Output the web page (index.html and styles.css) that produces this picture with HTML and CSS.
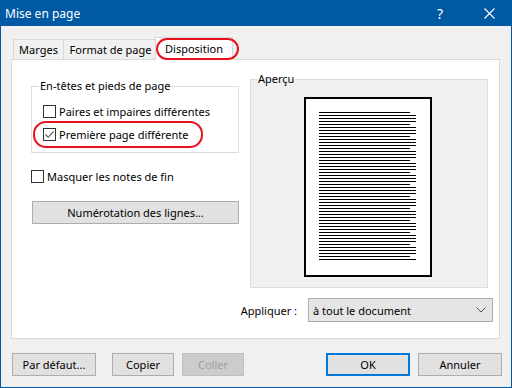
FILE: index.html
```html
<!DOCTYPE html>
<html lang="fr">
<head>
  <meta charset="UTF-8" />
  <title>Mise en page</title>
  <link rel="stylesheet" href="styles.css">
</head>
<body>
  <div class="window">
    <!-- Title bar -->
    <div class="titlebar">
      <span class="title">Mise en page</span>
      <span class="help">?</span>
      <span class="close">
        <svg width="11" height="11" viewBox="0 0 11 11"><path d="M0.5 0.5 L10.5 10.5 M10.5 0.5 L0.5 10.5" stroke="#fff" stroke-width="1.1" fill="none"/></svg>
      </span>
    </div>

    <div class="client">
      <!-- Tabs -->
      <div class="tabs">
        <div class="tab tab-marges">Marges</div>
        <div class="tab tab-format">Format de page</div>
        <div class="tab tab-active">Disposition<span class="mark mark-tab"></span></div>
      </div>

      <!-- Tab panel -->
      <div class="panel">
        <div class="columns">
          <div class="col-left">
            <fieldset class="group headers">
              <legend>En-têtes et pieds de page</legend>
              <label class="check"><span class="box"></span>Paires et impaires différentes</label>
              <label class="check">
                <span class="box">
                  <svg width="11" height="11" viewBox="0 0 11 11"><path d="M1.5 5.5 L4.2 8.3 L9.6 2.4" stroke="#555" stroke-width="1.1" fill="none"/></svg>
                </span>Première page différente<span class="mark mark-check"></span>
              </label>
            </fieldset>
            <label class="check solo"><span class="box"></span>Masquer les notes de fin</label>
            <button class="btn wide">Numérotation des lignes...</button>
          </div>

          <div class="col-right">
            <fieldset class="group preview">
              <legend>Aperçu</legend>
              <div class="page">
                <div class="lines"></div>
              </div>
            </fieldset>
          </div>
        </div>

        <div class="apply-row">
          <span class="apply-label">Appliquer :</span>
          <div class="select">
            <span>à tout le document</span>
            <svg width="10" height="6" viewBox="0 0 10 6"><path d="M0.5 0.5 L5 5 L9.5 0.5" stroke="#555" stroke-width="1" fill="none"/></svg>
          </div>
        </div>
      </div>

      <!-- Dialog buttons -->
      <div class="footer">
        <div class="btn-group">
          <button class="btn">Par défaut...</button>
          <button class="btn small copy">Copier</button>
          <button class="btn small" disabled>Coller</button>
        </div>
        <div class="btn-group right">
          <button class="btn default">OK</button>
          <button class="btn">Annuler</button>
        </div>
      </div>
    </div>
  </div>
</body>
</html>
```

FILE: styles.css
```css
body {
  margin: 0;
  font-family: "Noto Sans", sans-serif;
  font-size: 11px;
  color: #000;
}
.window {
  width: 512px;
  height: 388px;
  box-sizing: border-box;
  border: 1px solid #0059a3;
  border-top: none;
  background: #f0f0f0;
}
.titlebar {
  height: 26px;
  background: #0059a3;
  color: #fff;
  font-size: 12px;
  display: flex;
  align-items: center;
  padding-left: 4px;
}
.title {
  flex: 1;
}
.help {
  font-size: 14px;
  width: 12px;
  margin-right: 35px;
}
.close {
  display: flex;
  width: 11px;
  margin-right: 16px;
}

/* Tabs */
.tabs {
  display: flex;
  align-items: flex-end;
  height: 33px;
  padding-left: 12px;
}
.tab {
  box-sizing: border-box;
  height: 20px;
  border: 1px solid #d9d9d9;
  border-bottom: none;
  background: #f0f0f0;
  display: flex;
  align-items: center;
  justify-content: center;
}
.tab-marges {
  width: 51px;
}
.tab-format {
  width: 95px;
  margin-left: -1px;
}
.tab-active {
  position: relative;
  z-index: 1;
  width: 78px;
  height: 23px;
  margin-left: -3px;
  margin-bottom: -1px;
  padding-bottom: 1px;
  background: #fff;
}
.mark {
  position: absolute;
  border: 2px solid #e8111b;
  box-sizing: border-box;
}
.mark-tab {
  left: 0;
  top: 0;
  width: 83px;
  height: 22px;
  border-radius: 11px;
}

/* Panel */
.panel {
  box-sizing: border-box;
  width: 489px;
  margin-left: 10px;
  border: 1px solid #d9d9d9;
  background: #fff;
  padding: 12px 11px 16px 19px;
}
.columns {
  display: flex;
  gap: 11px;
}
.col-left {
  width: 208px;
  margin-top: 7px;
  display: flex;
  flex-direction: column;
}
.col-right {
  width: 238px;
}
.group {
  margin: 0;
  border: 1px solid #dcdcdc;
  min-width: 0;
}
.group legend {
  line-height: 14px;
  padding: 0 1px;
}
.headers {
  padding: 7px 0 6px 11px;
}
.headers legend {
  margin-left: -4px;
}
.check {
  position: relative;
  display: flex;
  align-items: center;
  height: 23px;
}
.box {
  box-sizing: border-box;
  width: 13px;
  height: 13px;
  border: 1px solid #333;
  background: #fff;
  margin-right: 3px;
  display: flex;
  align-items: center;
  justify-content: center;
}
.mark-check {
  left: -10px;
  top: -2px;
  width: 170px;
  height: 27px;
  border-radius: 13px;
}
.solo {
  margin-top: 12px;
}
.btn {
  box-sizing: border-box;
  font-family: inherit;
  font-size: 11px;
  color: #000;
  height: 23px;
  width: 84px;
  padding: 0;
  border: 1px solid #adadad;
  background: #e1e1e1;
}
.btn.wide {
  width: 207px;
  margin: 13px 0 0 1px;
}
.btn.small {
  width: 62px;
}
.btn.copy {
  margin-left: 16px;
  margin-right: 8px;
}
.btn:disabled {
  color: #a0a0a0;
  background: #cccccc;
  border-color: #bfbfbf;
}
.btn.default {
  border: 2px solid #0078d7;
  margin-right: 8px;
}

/* Preview */
.preview {
  background: #f0f0f0;
  padding: 11px 0 10px 0;
}
.preview legend {
  margin-left: 6px;
}
.page {
  box-sizing: border-box;
  width: 128px;
  height: 180px;
  margin-left: 53px;
  border: 2px solid #000;
  background: #fff;
  padding: 13px 14px 15px 13px;
}
.lines {
  height: 148px;
  background:
    repeating-linear-gradient(to bottom, #fff 0 1px, transparent 1px 12px) right / 6px 100% no-repeat,
    repeating-linear-gradient(to bottom, #000 0 1px, #fff 1px 3px);
}

/* Apply row */
.apply-row {
  display: flex;
  justify-content: flex-end;
  align-items: center;
  margin: 10px -5px 0 0;
}
.apply-label {
  margin-right: 11px;
}
.select {
  box-sizing: border-box;
  width: 185px;
  height: 24px;
  border: 1px solid #acacac;
  background: #e5e5e5;
  display: flex;
  align-items: center;
  justify-content: space-between;
  padding: 0 6px 0 4px;
}

/* Footer */
.footer {
  display: flex;
  margin-top: 14px;
  padding: 0 9px 0 11px;
}
.btn-group {
  display: flex;
}
.btn-group.right {
  margin-left: auto;
}
```
